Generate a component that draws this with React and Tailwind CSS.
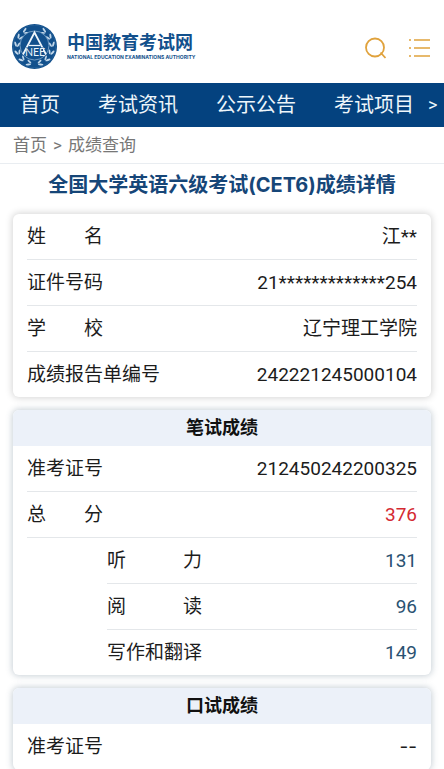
const NAV = ['首页', '考试资讯', '公示公告', '考试项目'];

const LEAVES = [28, 54, 80, 106, 132, 158];

function Emblem() {
  return (
    <svg viewBox="0 0 90 90" className="size-[45px] shrink-0" role="img" aria-label="NEEA">
      <circle cx="45" cy="45" r="45" fill="#12508c" />
      <circle cx="45" cy="45" r="42.5" fill="none" stroke="#2f689f" strokeWidth="1" />
      {LEAVES.map((a) => (
        <g key={a} fill="#c3d8ea">
          <g transform={`rotate(${a} 45 45)`}>
            <ellipse cx="47" cy="7" rx="5.5" ry="2" transform="rotate(28 47 7)" />
            <ellipse cx="47" cy="13" rx="5" ry="1.8" transform="rotate(-22 47 13)" />
          </g>
          <g transform={`rotate(${-a} 45 45)`}>
            <ellipse cx="43" cy="7" rx="5.5" ry="2" transform="rotate(-28 43 7)" />
            <ellipse cx="43" cy="13" rx="5" ry="1.8" transform="rotate(22 43 13)" />
          </g>
        </g>
      ))}
      <circle cx="45" cy="43" r="29" fill="#12508c" stroke="#8fb3d3" strokeWidth="1.5" />
      <path d="M22 61 L45 17 L68 61" fill="none" stroke="#eef5fb" strokeWidth="3.5" />
      <path d="M34 43 H56" stroke="#eef5fb" strokeWidth="2.5" />
      <path d="M28 47 H62 V64 H28 Z" fill="#12508c" />
      <text
        x="46"
        y="63"
        textAnchor="middle"
        fontSize="21"
        fontWeight="400"
        fill="#eef5fb"
        fontFamily="Lato, sans-serif"
      >
        NEE
      </text>
    </svg>
  );
}

function Row({ label, value, tone = 'text-[#1c1c1c]', last = false }) {
  return (
    <div
      className={`flex items-center justify-between whitespace-nowrap text-[19px] leading-[45px] ${
        last ? '' : 'border-b border-[#e4e7ea]'
      }`}
    >
      <dt className="text-[#1c1c1c]">{label}</dt>
      <dd className={tone}>{value}</dd>
    </div>
  );
}

function Card({ title, children }) {
  return (
    <section
      className={`overflow-hidden rounded-md bg-white ${
        title
          ? 'shadow-[0_0_6px_1px_rgba(60,90,110,0.28)]'
          : 'shadow-[0_0_7px_1px_rgba(0,0,0,0.17)]'
      }`}
    >
      {title && (
        <h2 className="bg-[#ecf1f9] text-center text-[18px] font-bold leading-9 text-[#111]">
          {title}
        </h2>
      )}
      <dl className="px-[14px]">{children}</dl>
    </section>
  );
}

export default function App() {
  return (
    <div className="h-screen overflow-hidden bg-white font-[Roboto,'Noto_Sans_CJK_SC',sans-serif]">
      <header className="flex items-center justify-between pt-6 pb-[14px] pr-[14px] pl-3">
        <a href="#home" className="flex items-center gap-[10px] text-[#12508c]">
          <Emblem />
          <span className="flex flex-col whitespace-nowrap">
            <span className="text-[18px] font-bold leading-5">中国教育考试网</span>
            <span className="font-[Inter,sans-serif] text-[5px] font-bold leading-2">
              NATIONAL EDUCATION EXAMINATIONS AUTHORITY
            </span>
          </span>
        </a>
        <div className="flex items-center gap-[22px] pt-[2px] text-[#e0a23c]">
          <button type="button" aria-label="搜索">
            <svg viewBox="0 0 22 22" className="size-[22px]" fill="none" stroke="currentColor" strokeWidth="1.8">
              <circle cx="11" cy="10.5" r="9" />
              <path d="M16.5 15.5 L21.5 21" />
            </svg>
          </button>
          <button type="button" aria-label="菜单">
            <svg viewBox="0 0 22 22" className="size-[22px]" fill="none" stroke="currentColor" strokeWidth="1.6">
              <path d="M1 3 H3 M6 3 H22 M1 11 H3 M6 11 H22 M1 19 H3 M6 19 H22" />
            </svg>
          </button>
        </div>
      </header>

      <nav className="flex items-center gap-[38px] whitespace-nowrap bg-[#04427f] pl-5 pr-2 text-[20px] leading-[44px] text-[#eef6fb]">
        {NAV.map((item) => (
          <a key={item} href="#nav">
            {item}
          </a>
        ))}
        <button type="button" aria-label="更多" className="-ml-6 text-[18px]">
          &gt;
        </button>
      </nav>

      <div className="flex gap-[6px] border-b border-[#e9edf1] px-[13px] text-[17px] leading-9 text-[#777]">
        <a href="#home">首页</a>
        <span>&gt;</span>
        <a href="#score">成绩查询</a>
      </div>

      <main className="px-[13px]">
        <h1 className="whitespace-nowrap text-center font-[Inter,'Noto_Sans_CJK_SC',sans-serif] text-[20px] font-bold leading-[42px] text-[#164678]">
          全国大学英语六级考试(CET6)成绩详情
        </h1>
        <div className="flex flex-col gap-[13px] pt-2">
          <Card>
            <Row label="姓　　名" value="江**" />
            <Row label="证件号码" value="21*************254" />
            <Row label="学　　校" value="辽宁理工学院" />
            <Row label="成绩报告单编号" value="242221245000104" last />
          </Card>
          <Card title="笔试成绩">
            <Row label="准考证号" value="212450242200325" />
            <Row label="总　　分" value="376" tone="text-[#d42a32]" />
            <div className="pl-20">
              <Row label="听　　　力" value="131" tone="text-[#2a5272]" />
              <Row label="阅　　　读" value="96" tone="text-[#2a5272]" />
              <Row label="写作和翻译" value="149" tone="text-[#2a5272]" last />
            </div>
          </Card>
          <Card title="口试成绩">
            <Row label="准考证号" value="--" tone="font-[Inter,sans-serif] text-[#1c1c1c]" />
          </Card>
        </div>
      </main>
    </div>
  );
}
